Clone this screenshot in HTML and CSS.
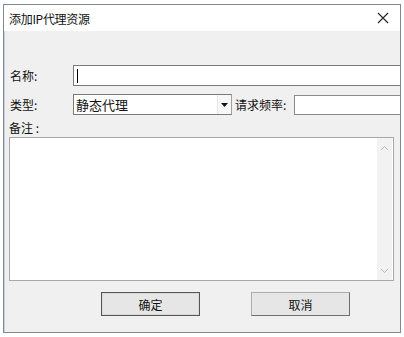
FILE: index.html
```html
<!DOCTYPE html>
<html>
<head>
<meta charset="utf-8">
<link rel="stylesheet" href="styles.css">
</head>
<body>
<div class="win">
  <div class="titlebar">
    <span class="title">添加IP代理资源</span>
    <svg class="close" width="12" height="12" viewBox="0 0 12 12"><path d="M1 1L11 11M11 1L1 11" stroke="#222" stroke-width="1.1" fill="none"/></svg>
  </div>
  <div class="body">
    <div class="row row-name">
      <span class="label">名称:</span>
      <div class="input name-input"><span class="caret"></span></div>
    </div>
    <div class="row row-type">
      <span class="label">类型:</span>
      <div class="select">
        <span class="select-text">静态代理</span>
        <span class="select-btn"><svg width="7" height="4" viewBox="0 0 7 4"><path d="M0 0H7L3.5 4Z" fill="#111"/></svg></span>
      </div>
      <span class="label2">请求频率:</span>
      <div class="input freq-input"></div>
    </div>
    <div class="note-label">备注 :</div>
    <div class="textarea">
      <div class="scroll">
        <svg width="9" height="6" viewBox="0 0 9 6"><path d="M1 5L4.5 1.5L8 5" stroke="#b8b8b8" stroke-width="1" fill="none"/></svg>
        <svg width="9" height="6" viewBox="0 0 9 6"><path d="M1 1L4.5 4.5L8 1" stroke="#b8b8b8" stroke-width="1" fill="none"/></svg>
      </div>
    </div>
    <div class="buttons">
      <div class="btn">确定</div>
      <div class="btn">取消</div>
    </div>
  </div>
</div>
</body>
</html>
```
FILE: styles.css
```css
html, body {
  margin: 0;
  padding: 0;
  background: #ffffff;
}
body {
  font-family: "Noto Sans CJK SC", "Noto Sans", sans-serif;
  font-size: 12px;
  color: #111;
}
.win {
  margin: 4px 0 0 3px;
  width: 396px;
  height: 327px;
  border: 1px solid #7d8a96;
  box-shadow: inset 1px 0 0 #c7d2dc;
  background: #f0f0f0;
  display: flex;
  flex-direction: column;
  overflow: hidden;
}
.titlebar {
  height: 26px;
  background: #ffffff;
  display: flex;
  align-items: center;
  justify-content: space-between;
  padding: 0 11px 0 5px;
  flex: none;
}
.title {
  font-size: 12px;
  color: #111;
  letter-spacing: -0.3px;
}
.close {
  display: block;
}
.body {
  flex: 1;
  display: flex;
  flex-direction: column;
  padding: 34px 0 0 5px;
}
.row {
  display: flex;
  align-items: center;
}
.label {
  width: 63px;
  padding-left: 1px;
  flex: none;
  font-size: 12px;
}
.input {
  background: #fff;
  border: 1px solid #7a7a7a;
  border-right: none;
  box-sizing: border-box;
}
.name-input {
  flex: 1;
  height: 21px;
  display: flex;
  align-items: center;
  padding-left: 3px;
}
.caret {
  width: 1px;
  height: 14px;
  background: #000;
}
.row-type {
  margin-top: 8px;
}
.select {
  width: 159px;
  height: 21px;
  box-sizing: border-box;
  border: 1px solid #7a7a7a;
  border-right-color: #a0a0a0;
  background: #fff;
  display: flex;
  align-items: center;
  justify-content: space-between;
  flex: none;
}
.select-text {
  padding-left: 2px;
  font-size: 13px;
}
.select-btn {
  width: 13px;
  height: 19px;
  display: flex;
  align-items: center;
  justify-content: center;
  border-left: 1px solid #e6e6e6;
  background: #f7f7f7;
}
.label2 {
  margin-left: 3px;
  width: 58px;
  flex: none;
  font-size: 12px;
  white-space: nowrap;
}
.freq-input {
  flex: 1;
  height: 20px;
  margin-left: 1px;
  border-color: #8a8a8a;
}
.note-label {
  margin-top: 4px;
  padding-left: 0;
  height: 18px;
  line-height: 18px;
  font-size: 12px;
}
.textarea {
  margin-top: 0;
  width: 385px;
  height: 144px;
  box-sizing: border-box;
  border: 1px solid #a8a8a8;
  background: #fff;
  display: flex;
  justify-content: flex-end;
}
.scroll {
  width: 15px;
  background: #f2f2f2;
  margin-right: 1px;
  display: flex;
  flex-direction: column;
  justify-content: space-between;
  align-items: center;
  padding: 7px 0 6px;
}
.buttons {
  display: flex;
  padding-left: 92px;
  gap: 51px;
  margin-top: 11px;
}
.btn {
  width: 99px;
  height: 24px;
  box-sizing: border-box;
  border: 1px solid #adadad;
  border-bottom-color: #6f6f6f;
  border-right-color: #6f6f6f;
  background: #e6e6e6;
  display: flex;
  align-items: center;
  justify-content: center;
  font-size: 12px;
}
.btn:first-child {
  border-color: #555;
  box-shadow: inset 0 0 0 1px #dadada;
}
```
